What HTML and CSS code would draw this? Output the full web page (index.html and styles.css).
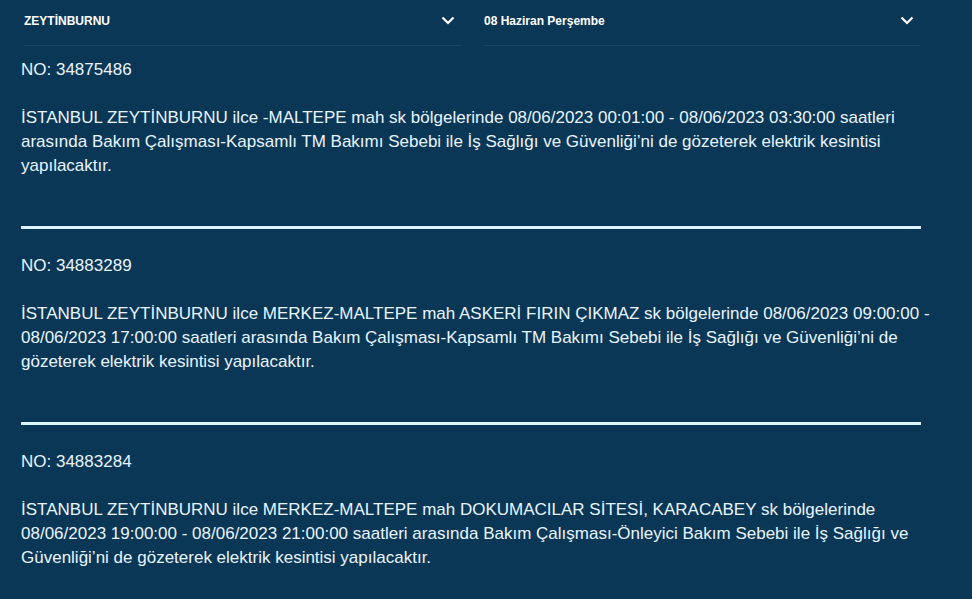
FILE: index.html
```html
<!DOCTYPE html>
<html lang="tr">

<head>
    <meta charset="UTF-8">
    <meta name="viewport" content="width=device-width, initial-scale=1.0">
    <title>Planlı Elektrik Kesintileri</title>
    <link rel="stylesheet" href="styles.css">
</head>

<body>
    <header class="filters">
        <div class="select">
            <span>ZEYTİNBURNU</span>
            <svg class="chevron" width="14" height="9" viewBox="0 0 14 9"><path d="M1.5 1.5 7 7l5.5-5.5" /></svg>
        </div>
        <div class="select">
            <span>08 Haziran Perşembe</span>
            <svg class="chevron" width="14" height="9" viewBox="0 0 14 9"><path d="M1.5 1.5 7 7l5.5-5.5" /></svg>
        </div>
    </header>

    <main class="list">
        <article class="notice">
            <p class="no">NO: 34875486</p>
            <p class="text">İSTANBUL ZEYTİNBURNU ilce -MALTEPE mah sk bölgelerinde 08/06/2023 00:01:00 - 08/06/2023 03:30:00 saatleri arasında Bakım Çalışması-Kapsamlı TM Bakımı Sebebi ile İş Sağlığı ve Güvenliği’ni de gözeterek elektrik kesintisi yapılacaktır.</p>
        </article>
        <hr class="sep">
        <article class="notice">
            <p class="no">NO: 34883289</p>
            <p class="text">İSTANBUL ZEYTİNBURNU ilce MERKEZ-MALTEPE mah ASKERİ FIRIN ÇIKMAZ sk bölgelerinde 08/06/2023 09:00:00 - 08/06/2023 17:00:00 saatleri arasında Bakım Çalışması-Kapsamlı TM Bakımı Sebebi ile İş Sağlığı ve Güvenliği’ni de gözeterek elektrik kesintisi yapılacaktır.</p>
        </article>
        <hr class="sep">
        <article class="notice">
            <p class="no">NO: 34883284</p>
            <p class="text">İSTANBUL ZEYTİNBURNU ilce MERKEZ-MALTEPE mah DOKUMACILAR SİTESİ, KARACABEY sk bölgelerinde 08/06/2023 19:00:00 - 08/06/2023 21:00:00 saatleri arasında Bakım Çalışması-Önleyici Bakım Sebebi ile İş Sağlığı ve Güvenliği’ni de gözeterek elektrik kesintisi yapılacaktır.</p>
        </article>
    </main>
</body>

</html>
```

FILE: styles.css
```css
body {
    margin: 0;
    background-color: #0b3756;
    color: #e8f5ff;
    font-family: "Liberation Sans", Arial, sans-serif;
}

.filters {
    display: grid;
    grid-template-columns: 437px 436px;
    column-gap: 23px;
    padding-left: 24px;
}

.select {
    height: 46px;
    display: flex;
    align-items: center;
    justify-content: space-between;
    border-bottom: 1px solid #1a4666;
    font-size: 12px;
    font-weight: bold;
    color: #ffffff;
    padding-bottom: 4px;
    box-sizing: border-box;
}

.chevron {
    margin-right: 6px;
    fill: none;
    stroke: #ffffff;
    stroke-width: 2.2;
}

.list {
    width: 900px;
    padding: 12px 0 0 21px;
}

.notice p {
    margin: 0;
    font-size: 17px;
    line-height: 24px;
}

.notice .no {
    margin-bottom: 24px;
}

/* text runs a bit past the rule so the trailing dash stays on the line */
.notice .text {
    margin-right: -16px;
}

.sep {
    margin: 48px 0 25px;
    border: 0;
    height: 3px;
    background-color: #dcf4ff;
}
```
